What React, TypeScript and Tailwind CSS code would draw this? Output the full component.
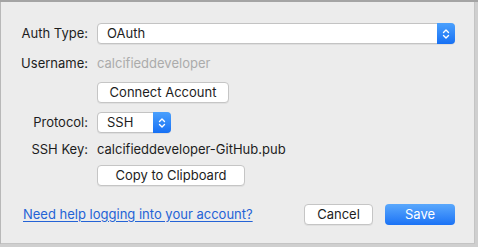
import React from 'react';

const font = { fontFamily: 'Inter, "Liberation Sans", sans-serif' };

const Stepper = () => (
    <svg width="8" height="12" viewBox="0 0 8 12" fill="none" stroke="white" strokeWidth="1.4" strokeLinecap="round" strokeLinejoin="round">
        <path d="M1.5 4.5L4 2l2.5 2.5" />
        <path d="M1.5 7.5L4 10l2.5-2.5" />
    </svg>
);

const PopUp = ({ value, className }: { value: string; className: string }) => (
    <div className={`flex h-[21px] rounded-[4px] border border-[#c3c3c3] bg-white shadow-[0_1px_0_rgba(0,0,0,0.06)] ${className}`}>
        <span className="flex-1 pl-[9px] text-[13px] leading-[19px] text-[#1d1d1d]">{value}</span>
        <span className="-my-px -mr-px flex w-[18px] items-center justify-center rounded-r-[4px] bg-gradient-to-b from-[#4aa0fd] to-[#1670f4]">
            <Stepper />
        </span>
    </div>
);

const PushButton = ({ children, className }: { children: React.ReactNode; className: string }) => (
    <button className={`h-[21px] rounded-[4px] border border-[#c5c5c5] bg-white text-[13px] leading-[19px] text-[#1d1d1d] shadow-[0_1px_0_rgba(0,0,0,0.05)] ${className}`}>
        {children}
    </button>
);

const Label = ({ children }: { children: React.ReactNode }) => (
    <span className="w-[88px] shrink-0 pr-px text-right text-[13px] text-[#1d1d1d]">{children}</span>
);

export default function App() {
    return (
        <div className="h-[247px] w-[478px] overflow-hidden bg-[#cfcfcf]" style={font}>
            <div className="h-[2px] bg-[#a4a4a4]" />
            <div className="flex">
                <div className="w-px bg-[#b8b8b8]" />
                <div className="flex h-[242px] w-[474px] flex-col border-r border-b border-[#c4c4c4] bg-[#ececec] pt-[21px] pr-[19px]">
                    <div className="flex h-[21px] items-center gap-2">
                        <Label>Auth Type:</Label>
                        <PopUp value="OAuth" className="flex-1" />
                    </div>
                    <div className="mt-[9px] flex h-[21px] items-center gap-2">
                        <Label>Username:</Label>
                        <span className="text-[13px] text-[#ababab]">calcifieddeveloper</span>
                    </div>
                    <div className="mt-[8px] flex h-[21px] items-center gap-2">
                        <span className="w-[88px] shrink-0" />
                        <PushButton className="w-[132px]">Connect Account</PushButton>
                    </div>
                    <div className="mt-[9px] flex h-[21px] items-center gap-2">
                        <Label>Protocol:</Label>
                        <PopUp value="SSH" className="w-[74px]" />
                    </div>
                    <div className="mt-[6px] flex h-[21px] items-center gap-2">
                        <Label>SSH Key:</Label>
                        <span className="text-[13px] text-[#1d1d1d]">calcifieddeveloper-GitHub.pub</span>
                    </div>
                    <div className="mt-[5px] flex h-[21px] items-center gap-2">
                        <span className="w-[88px] shrink-0" />
                        <PushButton className="w-[148px]">Copy to Clipboard</PushButton>
                    </div>
                    <div className="mt-[18px] flex h-[21px] items-center pl-[22px]">
                        <a href="#" className="flex-1 text-[13px] text-[#2463d6] underline underline-offset-2">Need help logging into your account?</a>
                        <PushButton className="w-[69px]">Cancel</PushButton>
                        <button className="ml-[12px] h-[21px] w-[70px] rounded-[4px] bg-gradient-to-b from-[#5aa8fc] to-[#1a72f5] text-[13px] leading-[21px] text-white">
                            Save
                        </button>
                    </div>
                </div>
            </div>
        </div>
    );
}
